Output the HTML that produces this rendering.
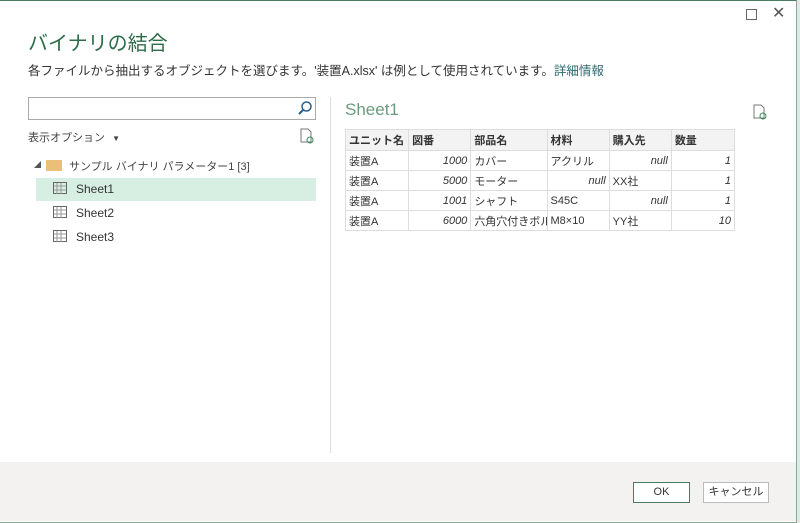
<!DOCTYPE html>
<html><head><meta charset="utf-8"><style>
body{margin:0;width:800px;height:523px;overflow:hidden;background:#fff;font-family:"Liberation Sans","Noto Sans CJK JP",sans-serif;position:relative}
.a{position:absolute}
.dlg{left:0;top:0;width:796px;height:521px;border-top:1px solid #4c7a5e;border-right:1px solid #8aa898;border-bottom:1px solid #8aa898;background:#fff}
table{border-collapse:collapse;font-size:11px;color:#333;table-layout:fixed}
td,th{border:1px solid #ddd;height:19px;padding:0 3px;white-space:nowrap;overflow:hidden}
th{background:#f3f3f3;text-align:left;font-weight:bold;height:20px}
.n{text-align:right;font-style:italic}
.btn{border:1px solid #bbb;background:#fff;font-size:11px;text-align:center;line-height:19px;height:19px}
</style></head><body>
<div class="a" style="left:797px;top:0;width:3px;height:523px;background:#e6e6e6"></div>
<div class="a dlg"></div>
<div class="a" style="left:746px;top:9px;width:9px;height:9px;border:1px solid #666"></div>
<div class="a" style="left:772px;top:3px;font-size:16px;color:#555">✕</div>
<div class="a" style="left:28px;top:27px;font-size:20px;color:#2e6b47">バイナリの結合</div>
<div class="a" style="left:28px;top:60px;font-size:12.5px;color:#333">各ファイルから抽出するオブジェクトを選びます。'装置A.xlsx' は例として使用されています。<span style="color:#2e6b70">詳細情報</span></div>
<div class="a" style="left:28px;top:97px;width:286px;height:21px;border:1px solid #aaa"></div>
<svg class="a" style="left:297px;top:100px" width="16" height="16"><circle cx="9.5" cy="6.5" r="4.5" fill="none" stroke="#2a5f8a" stroke-width="1.5"/><line x1="6" y1="10" x2="2" y2="14" stroke="#2a5f8a" stroke-width="2"/></svg>
<div class="a" style="left:28px;top:129px;font-size:11px;color:#444">表示オプション <span style="font-size:8px;margin-left:4px">▼</span></div>
<svg class="a" style="left:299px;top:128px" width="16" height="16"><path d="M2 1h7l3 3v10H2z" fill="none" stroke="#777"/><circle cx="11" cy="12" r="3" fill="none" stroke="#3a8a5a"/></svg>
<div class="a" style="left:34px;top:160px;font-size:7px;color:#555">◢</div>
<div class="a" style="left:46px;top:160px;width:16px;height:11px;background:#e8c078"></div>
<div class="a" style="left:69px;top:158px;font-size:11px;color:#444">サンプル バイナリ パラメーター1 [3]</div>
<div class="a" style="left:36px;top:178px;width:280px;height:23px;background:#d6efe2"></div>
<svg class="a" style="left:53px;top:182px" width="14" height="13"><rect x="0.5" y="0.5" width="13" height="11" fill="none" stroke="#666"/><path d="M1 4h12M1 8h12M4 1v11M8 1v11" stroke="#999"/></svg>
<svg class="a" style="left:53px;top:206px" width="14" height="13"><rect x="0.5" y="0.5" width="13" height="11" fill="none" stroke="#666"/><path d="M1 4h12M1 8h12M4 1v11M8 1v11" stroke="#999"/></svg>
<svg class="a" style="left:53px;top:230px" width="14" height="13"><rect x="0.5" y="0.5" width="13" height="11" fill="none" stroke="#666"/><path d="M1 4h12M1 8h12M4 1v11M8 1v11" stroke="#999"/></svg>
<div class="a" style="left:76px;top:182px;font-size:12px;color:#333">Sheet1</div>
<div class="a" style="left:76px;top:206px;font-size:12px;color:#333">Sheet2</div>
<div class="a" style="left:76px;top:230px;font-size:12px;color:#333">Sheet3</div>
<div class="a" style="left:330px;top:97px;width:1px;height:356px;background:#ddd"></div>
<div class="a" style="left:345px;top:100px;font-size:17px;color:#6b9a7e">Sheet1</div>
<svg class="a" style="left:752px;top:104px" width="16" height="16"><path d="M2 1h7l3 3v10H2z" fill="none" stroke="#777"/><circle cx="11" cy="12" r="3" fill="none" stroke="#3a8a5a"/></svg>
<table class="a" style="left:345px;top:129px;width:390px">
<colgroup><col style="width:63px"><col style="width:62px"><col style="width:76px"><col style="width:62px"><col style="width:62px"><col style="width:63px"></colgroup>
<tr><th>ユニット名</th><th>図番</th><th>部品名</th><th>材料</th><th>購入先</th><th>数量</th></tr>
<tr><td>装置A</td><td class="n">1000</td><td>カバー</td><td>アクリル</td><td class="n">null</td><td class="n">1</td></tr>
<tr><td>装置A</td><td class="n">5000</td><td>モーター</td><td class="n">null</td><td>XX社</td><td class="n">1</td></tr>
<tr><td>装置A</td><td class="n">1001</td><td>シャフト</td><td>S45C</td><td class="n">null</td><td class="n">1</td></tr>
<tr><td>装置A</td><td class="n">6000</td><td>六角穴付きボルト</td><td>M8×10</td><td>YY社</td><td class="n">10</td></tr>
</table>
<div class="a" style="left:0;top:462px;width:796px;height:59px;background:#f3f2f1"></div>
<div class="a btn" style="left:633px;top:482px;width:55px;border:1px solid #4c7a5e;color:#333">OK</div>
<div class="a btn" style="left:703px;top:482px;width:64px;color:#333">キャンセル</div>
</body></html>
